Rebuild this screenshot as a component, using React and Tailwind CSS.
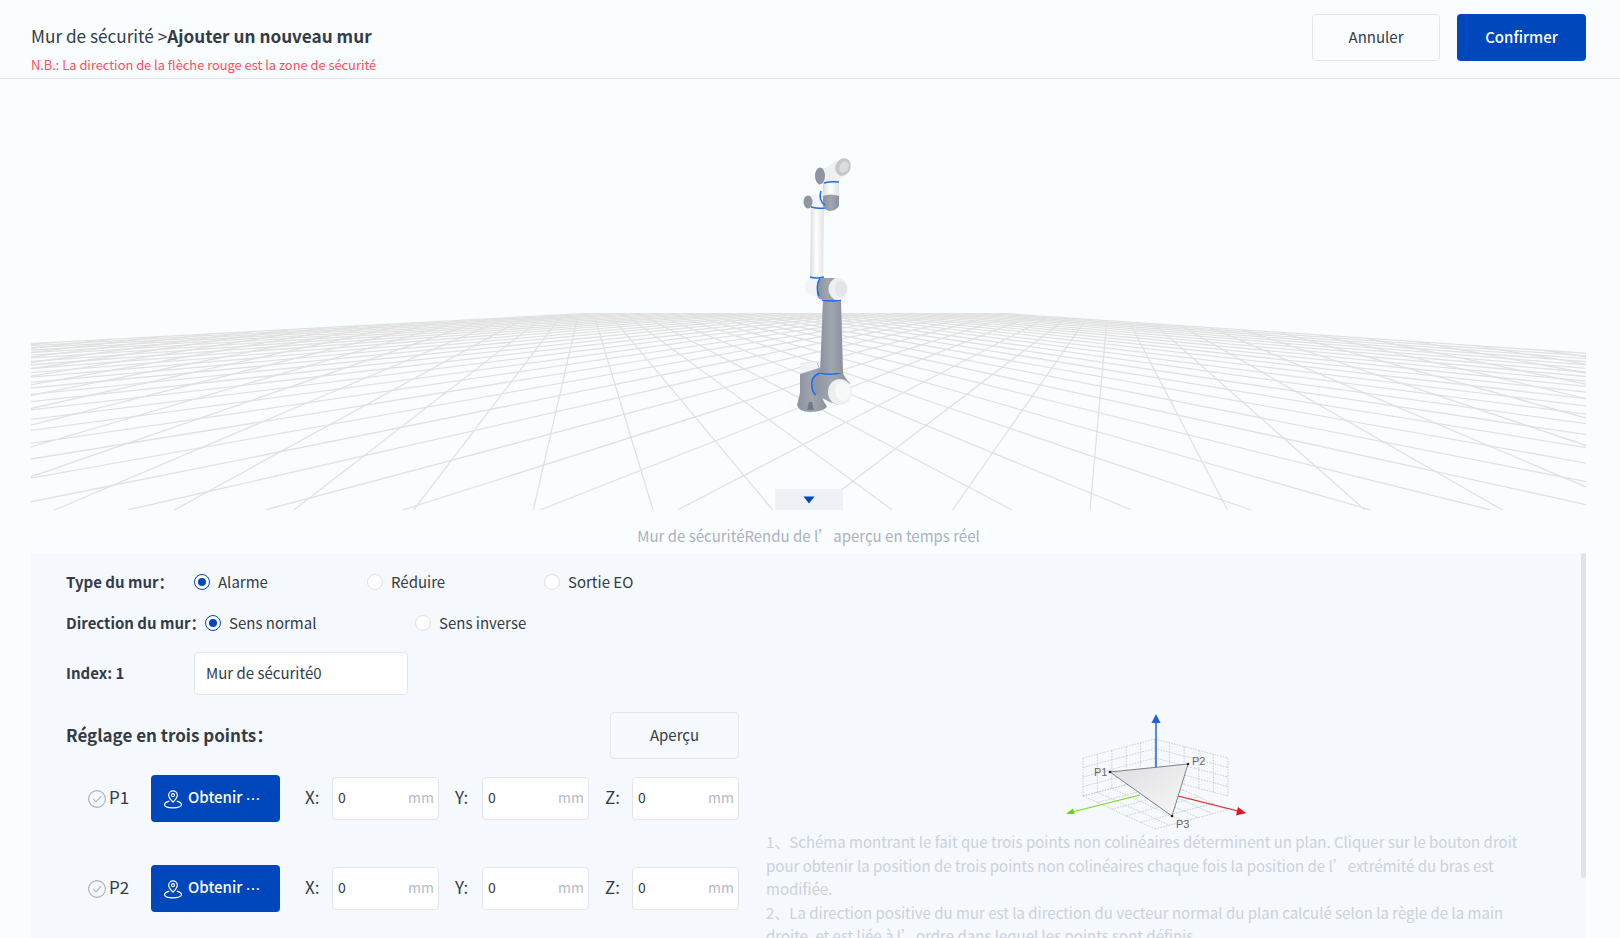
const FONT = '"Noto Sans CJK SC", "Noto Sans", sans-serif';

// vanishing points and where the line families cross the canvas bottom, page coords
const VA = [585, 285];
const VB = [1110, 285];
const BOTTOM = 510;
const lineA = (k) => 653 + 119.7 * k;
const lineB = (j) => 1090 + 137.5 * j;

const meet = (p1, p2, p3, p4) => {
  const d = (p1[0] - p2[0]) * (p3[1] - p4[1]) - (p1[1] - p2[1]) * (p3[0] - p4[0]);
  const a = p1[0] * p2[1] - p1[1] * p2[0];
  const b = p3[0] * p4[1] - p3[1] * p4[0];
  return [(a * (p3[0] - p4[0]) - (p1[0] - p2[0]) * b) / d, (a * (p3[1] - p4[1]) - (p1[1] - p2[1]) * b) / d];
};

const gridLines = () => {
  const out = [];
  const farA = [lineA(27), BOTTOM];
  const farB = [lineB(-30), BOTTOM];
  for (let k = -19; k <= 27; k++) {
    const end = [lineA(k), BOTTOM];
    out.push([meet(VA, end, VB, farB), end]);
  }
  for (let j = -30; j <= 12; j++) {
    const end = [lineB(j), BOTTOM];
    out.push([meet(VB, end, VA, farA), end]);
  }
  return out;
};

const BLUE_LINE = { fill: 'none', stroke: '#1f6bf0', strokeWidth: 1.5 };

const Robot = () => (
  <g>
    <defs>
      <linearGradient id="armWhite" x1="0" x2="1" y1="0" y2="0">
        <stop offset="0" stopColor="#d9dcdf" />
        <stop offset="0.45" stopColor="#ffffff" />
        <stop offset="1" stopColor="#dfe2e5" />
      </linearGradient>
      <linearGradient id="armGray" x1="0" x2="1" y1="0" y2="0">
        <stop offset="0" stopColor="#8b929d" />
        <stop offset="0.5" stopColor="#a0a6b0" />
        <stop offset="1" stopColor="#8a919c" />
      </linearGradient>
    </defs>
    {/* base */}
    <path d="M800 364 L816 361 L822 372 L822 398 L827 407 Q822 412 810 412 Q799 412 797 405 L800 393 Z" fill="url(#armGray)" />
    <path d="M800 364 L816 361 L819 368 L800 374 Z" fill="#f1f2f3" />
    <path d="M809 402 L812 402 L814 410 L807 410 Z" fill="#737a85" />
    {/* shoulder */}
    <path d="M812 388 Q812 374 820 373 L843 373 Q846 380 850 383 L838 405 Q820 400 812 388 Z" fill="url(#armGray)" />
    <path d="M820 373 Q810 376 812 388 Q813 393 816 395" {...BLUE_LINE} />
    <path d="M820 373 Q832 376 843 372" {...BLUE_LINE} />
    <ellipse cx="840" cy="392" rx="12" ry="13" fill="#eceef0" />
    <ellipse cx="843" cy="391" rx="8" ry="10" fill="#f7f8f8" />
    {/* forearm */}
    <path d="M823 300 L841 300 L843 373 L820 373 Z" fill="url(#armGray)" />
    <path d="M822 300 Q832 302 841 300" {...BLUE_LINE} />
    {/* upper arm */}
    <path d="M811 208 L824 208 L823 279 L810 279 Z" fill="url(#armWhite)" />
    <path d="M810 277 Q817 279 824 277" {...BLUE_LINE} />
    {/* elbow */}
    <rect x="805" y="279" width="22" height="17" rx="8" fill="#f3f4f5" />
    <rect x="817" y="278" width="22" height="22" rx="6" fill="url(#armGray)" />
    <path d="M820 278 Q815 287 819 296" {...BLUE_LINE} />
    <ellipse cx="838" cy="289" rx="9.5" ry="11" fill="#eeeff1" />
    <ellipse cx="841" cy="289" rx="6" ry="8" fill="#e3e5e7" />
    {/* wrist */}
    <rect x="804" y="195" width="24" height="14" rx="7" fill="#f2f3f4" />
    <ellipse cx="808" cy="202" rx="4.5" ry="6.5" fill="#8f96a1" />
    <path d="M811 207 Q818 209 825 208" {...BLUE_LINE} />
    <rect x="823" y="182" width="16" height="24" fill="url(#armWhite)" />
    <path d="M823 196 Q830 193 839 196 L839 206 Q836 211 829 211 Q825 210 823 206 Z" fill="url(#armGray)" />
    <path d="M821 191 Q818 200 825 205" {...BLUE_LINE} />
    {/* head */}
    <path d="M818 168 Q826 170 836 160 L846 174 Q840 181 836 182 L824 183 L818 185 Z" fill="#eff0f2" />
    <path d="M824 183 Q830 181 839 182" {...BLUE_LINE} />
    <ellipse cx="820" cy="176" rx="5" ry="8.5" fill="#8f96a1" />
    <ellipse cx="843" cy="167" rx="7.5" ry="9" fill="#c4c7ca" transform="rotate(25 843 167)" />
    <ellipse cx="844" cy="167" rx="4.5" ry="6" fill="#dadcde" transform="rotate(25 844 167)" />
  </g>
);

const Radio = ({ checked, label, className }) => (
  <div className={`flex items-center ${className}`}>
    {checked ? (
      <span className="flex h-4 w-4 items-center justify-center rounded-full border border-[#0047bb] bg-white">
        <span className="h-2 w-2 rounded-full bg-[#0047bb]" />
      </span>
    ) : (
      <span className="h-4 w-4 rounded-full border border-[#dcdfe6] bg-white" />
    )}
    <span className="ml-2 text-[15px] text-[#333b48]">{label}</span>
  </div>
);

const PinIcon = () => (
  <svg width="20" height="20" viewBox="0 0 20 20" fill="none" stroke="currentColor" strokeWidth="1.2" className="shrink-0">
    <path d="M10 13.2 C7.6 10.8 5.7 8.8 5.7 6.2 A4.3 4.3 0 0 1 14.3 6.2 C14.3 8.8 12.4 10.8 10 13.2 Z" />
    <circle cx="10" cy="6.2" r="1.5" />
    <path d="M6.2 12.2 C3.4 13 1.5 14.3 1.5 15.8 C1.5 17.6 5.3 18.8 10 18.8 C14.7 18.8 18.5 17.6 18.5 15.8 C18.5 14.3 16.6 13 13.8 12.2" />
  </svg>
);

const CheckIcon = () => (
  <svg width="18" height="18" viewBox="0 0 18 18" fill="none" stroke="#a9b0bd" strokeWidth="1.1" className="shrink-0">
    <circle cx="9" cy="9" r="8.4" />
    <path d="M5.2 9.2 L8 11.8 L13 6.4" />
  </svg>
);

const CoordInput = ({ axis }) => (
  <div className="flex items-center">
    <span className="w-[27px] pb-[4px] text-[17px] text-[#333b48]">{axis}:</span>
    <div className="flex h-[43px] w-[107px] items-center justify-between rounded border border-[#e2e6ec] bg-white pb-[3px] pl-[5px] pr-[4px] text-[14px]">
      <span className="text-[#333b48]">0</span>
      <span className="text-[#b4bac6]">mm</span>
    </div>
  </div>
);

const PointRow = ({ name, className }) => (
  <div className={`flex items-center ${className}`}>
    <div className="ml-[22px] flex w-[63px] items-center">
      <CheckIcon />
      <span className="ml-[3px] pb-[4px] text-[17px] text-[#333b48]">{name}</span>
    </div>
    <button className="flex h-[47px] w-[129px] items-center whitespace-nowrap rounded bg-[#0047bb] pl-[12px] text-[15px] font-medium text-white">
      <PinIcon />
      <span className="ml-[5px] pb-[3px]">
        Obtenir <span className="relative -top-[3px] text-[13px]">⋯</span>
      </span>
    </button>
    <div className="ml-[25px] flex gap-[16px]">
      <CoordInput axis="X" />
      <CoordInput axis="Y" />
      <CoordInput axis="Z" />
    </div>
  </div>
);

const dash = { stroke: '#bdbdbd', strokeWidth: 0.7, strokeDasharray: '1.6 1.2', fill: 'none' };

// walls and floor of the little axis drawing, mapped from a unit square
const Mesh = ({ o, u, v, nu, nv }) => {
  const lines = [];
  const at = (a, b) => [o[0] + u[0] * a + v[0] * b, o[1] + u[1] * a + v[1] * b];
  for (let i = 0; i <= nu; i++) lines.push([at(i / nu, 0), at(i / nu, 1)]);
  for (let i = 0; i <= nv; i++) lines.push([at(0, i / nv), at(1, i / nv)]);
  return lines.map(([a, b], i) => <line key={i} x1={a[0]} y1={a[1]} x2={b[0]} y2={b[1]} {...dash} />);
};

const AxisDiagram = () => (
  <svg width="200" height="118" viewBox="1060 712 200 118" className="ml-[294px] mt-[1px] block">
    <defs>
      <linearGradient id="tri" x1="0" x2="1" y1="0" y2="1">
        <stop offset="0" stopColor="#dedee0" />
        <stop offset="1" stopColor="#f7f7f8" />
      </linearGradient>
    </defs>
    <Mesh o={[1083, 757]} u={[72, -19]} v={[0, 38]} nu={5} nv={4} />
    <Mesh o={[1155, 738]} u={[73, 19]} v={[0, 38]} nu={5} nv={4} />
    <Mesh o={[1083, 795]} u={[72, -19]} v={[72, 33]} nu={5} nv={5} />
    <line x1="1156" y1="767" x2="1156" y2="720" stroke="#2f6be4" strokeWidth="1.6" />
    <path d="M1156 713 L1160.5 722 L1151.5 722 Z" fill="#1f5fe0" />
    <line x1="1140" y1="794" x2="1072" y2="811" stroke="#7ed321" strokeWidth="1.2" />
    <path d="M1066 813 L1073 807.5 L1074.5 813 Z" fill="#6fd100" />
    <line x1="1178" y1="795" x2="1238" y2="810" stroke="#e8141a" strokeWidth="1.2" />
    <path d="M1246 812 L1236 814.5 L1238 806 Z" fill="#e8141a" />
    <path d="M1110 771 L1188 763 L1172 815 Z" fill="url(#tri)" stroke="#666" strokeWidth="0.8" />
    <circle cx="1110" cy="771" r="1.3" fill="#222" />
    <circle cx="1188" cy="763" r="1.3" fill="#222" />
    <circle cx="1172" cy="815" r="1.3" fill="#222" />
    <g fontFamily='"Liberation Sans", sans-serif' fontSize="11" fill="#666">
      <text x="1094" y="775">P1</text>
      <text x="1192" y="764">P2</text>
      <text x="1176" y="827">P3</text>
    </g>
  </svg>
);

export default function App() {
  return (
    <div className="flex h-screen flex-col overflow-hidden bg-[#fafdff]" style={{ fontFamily: FONT }}>
      <header className="flex h-[79px] shrink-0 items-start justify-between border-b border-[#e2e6ec] pl-[31px] pr-[34px]">
        <div>
          <div className="mt-[22px] text-[17.2px] leading-[28px] text-[#333b48]">
            Mur de sécurité &gt;<span className="font-bold">Ajouter un nouveau mur</span>
          </div>
          <div className="mt-[6px] text-[12.85px] leading-[18px] text-[#ff4d5a]">
            N.B.: La direction de la flèche rouge est la zone de sécurité
          </div>
        </div>
        <div className="mt-[14px] flex gap-[17px]">
          <button className="h-[47px] w-[128px] rounded border border-[#e2e6ec] pb-[1px] text-[15px] text-[#333b48]">Annuler</button>
          <button className="h-[47px] w-[129px] rounded bg-[#0047bb] pb-[1px] text-[15px] font-medium text-white">Confirmer</button>
        </div>
      </header>

      <div className="relative ml-[31px] h-[431px] w-[1555px] shrink-0">
        <svg width="1555" height="431" viewBox="31 79 1555 431" className="block">
          <defs>
            <clipPath id="floorClip">
              <rect x="31" y="313" width="1555" height="197" />
            </clipPath>
          </defs>
          <g clipPath="url(#floorClip)">
            {gridLines().map(([a, b], i) => (
              <line key={i} x1={a[0]} y1={a[1]} x2={b[0]} y2={b[1]} stroke="#e1e1e1" strokeWidth="1.3" />
            ))}
          </g>
          <Robot />
        </svg>
        <div className="absolute bottom-0 left-[744px] flex h-[21px] w-[68px] items-center justify-center bg-[#eff1f6]">
          <svg width="12" height="8" viewBox="0 0 12 8">
            <path d="M0.5 0.5 H11.5 L6 7.5 Z" fill="#0047bb" />
          </svg>
        </div>
      </div>

      <div className="ml-[31px] h-[43px] w-[1555px] shrink-0 pt-[14px] text-center text-[15px] leading-[24px] text-[#a9b1bf]">
        Mur de sécuritéRendu de l’aperçu en temps réel
      </div>

      <section className="relative ml-[31px] mr-[34px] flex-1 overflow-hidden bg-[#f5f8fc] pl-[35px] pt-[17px]">
        <div className="absolute right-0 top-0 h-[325px] w-[5px] rounded-sm bg-[#dfe3e8]" />

        <div className="flex h-[24px] items-center">
          <span className="w-[128px] text-[15px] font-bold text-[#333b48]">Type du mur：</span>
          <Radio checked label="Alarme" className="w-[173px]" />
          <Radio label="Réduire" className="w-[177px]" />
          <Radio label="Sortie EO" />
        </div>
        <div className="mt-[17px] flex h-[24px] items-center">
          <span className="w-[139px] shrink-0 whitespace-nowrap text-[15px] font-bold text-[#333b48]">Direction du mur：</span>
          <Radio checked label="Sens normal" className="w-[210px]" />
          <Radio label="Sens inverse" />
        </div>
        <div className="mt-[17px] flex items-center">
          <span className="w-[128px] pb-[1px] text-[15px] font-bold text-[#333b48]">Index: 1</span>
          <div className="flex h-[43px] w-[214px] items-center rounded border border-[#e2e6ec] bg-white pb-[1px] pl-[11px] text-[15px] text-[#333b48]">
            Mur de sécurité0
          </div>
        </div>

        <div className="mt-[17px] flex items-start">
          <div className="w-[673px] shrink-0">
            <div className="flex items-center justify-between">
              <span className="pb-[2px] text-[17px] font-bold leading-[24px] text-[#333b48]">Réglage en trois points：</span>
              <button className="h-[47px] w-[129px] rounded border border-[#e2e6ec] text-[15px] text-[#333b48]">Aperçu</button>
            </div>
            <PointRow name="P1" className="mt-[16px]" />
            <PointRow name="P2" className="mt-[43px]" />
          </div>
          <div className="ml-[27px] w-[770px] shrink-0">
            <AxisDiagram />
            <div className="-mt-[1px] w-[770px] text-[15px] leading-[23.5px] text-[#cbd1da]">
              <p>1、Schéma montrant le fait que trois points non colinéaires déterminent un plan. Cliquer sur le bouton droit pour obtenir la position de trois points non colinéaires chaque fois la position de l’extrémité du bras est modifiée.</p>
              <p>2、La direction positive du mur est la direction du vecteur normal du plan calculé selon la règle de la main droite, et est liée à l’ordre dans lequel les points sont définis.</p>
            </div>
          </div>
        </div>
      </section>
    </div>
  );
}
